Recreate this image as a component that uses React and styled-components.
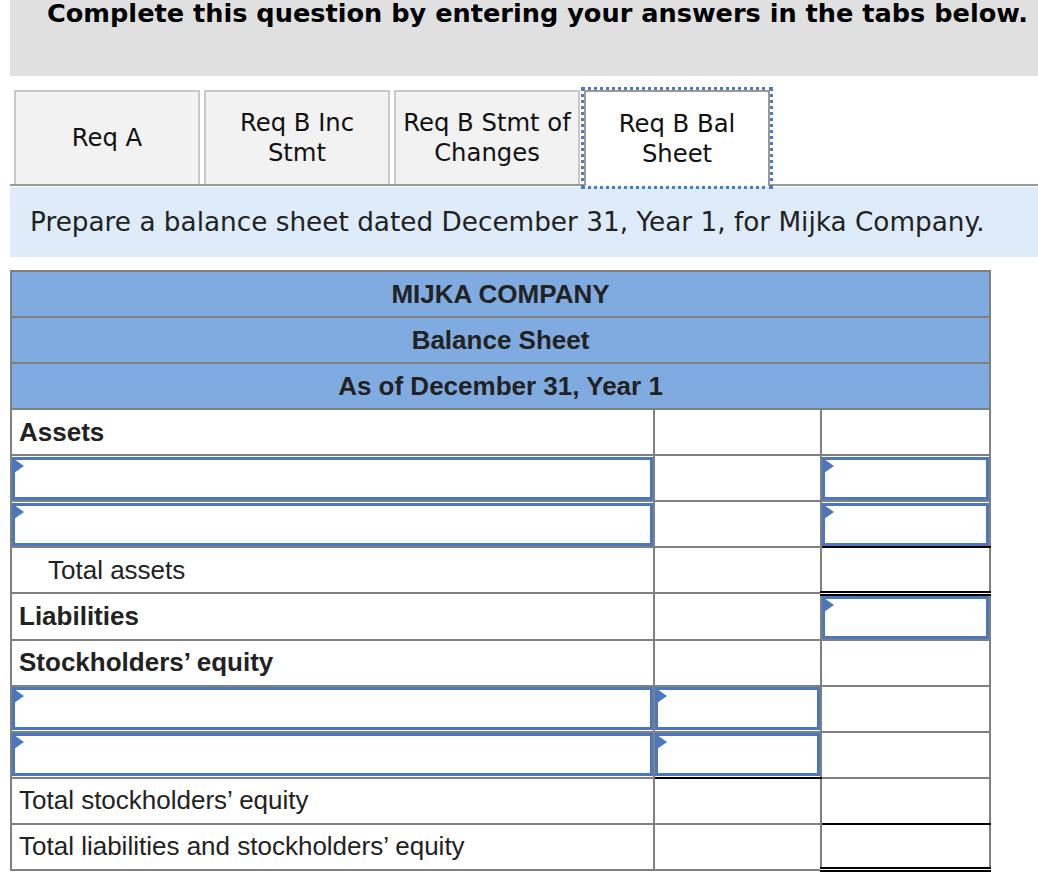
import React from 'react';
import styled, { createGlobalStyle, css } from 'styled-components';

const GlobalStyle = createGlobalStyle`
  * {
    margin: 0;
    padding: 0;
    box-sizing: border-box;
  }

  body {
    background: #ffffff;
    font-family: "DejaVu Sans", Verdana, sans-serif;
    overflow: hidden;
  }
`

const Page = styled.div`
  width: 1038px;
  padding-left: 10px;
`

const Banner = styled.div`
  height: 76px;
  background: #e0e0e0;
  padding-left: 37px;
  white-space: nowrap;
  overflow: hidden;
`

const BannerTitle = styled.h2`
  font-size: 25.6px;
  font-weight: 700;
  line-height: 26px;
  color: #000000;
`

const TabBar = styled.div`
  display: flex;
  gap: 4px;
  margin-top: 14px;
  padding-left: 4px;
  height: 96px;
  border-bottom: 2px solid #999999;
`

const Tab = styled.div`
  width: 186px;
  height: 94px;
  display: flex;
  align-items: center;
  justify-content: center;
  text-align: center;
  font-size: 24.3px;
  line-height: 30px;
  color: #111111;
  background: #f2f2f2;
  border: 2px solid #c8c8c8;
  border-bottom: none;
  cursor: pointer;

  ${p => p.$active && css`
    position: relative;
    z-index: 1;
    height: 96px;
    background: #ffffff;
    border-color: #999999;
    outline: 3px dotted #4a7cc4;
    outline-offset: 0;
  `}
`

const Prompt = styled.p`
  margin-top: 1px;
  height: 70px;
  display: flex;
  align-items: center;
  padding-left: 20px;
  background: #deecf9;
  font-size: 26.3px;
  color: #222222;
  white-space: nowrap;
`

const Sheet = styled.table`
  margin-top: 13px;
  width: 979px;
  border-collapse: collapse;
  table-layout: fixed;
  font-family: "Liberation Sans", Arial, sans-serif;
  font-size: 26px;
  color: #222222;
`

const HeadCell = styled.th`
  height: 46px;
  padding: 0;
  background: #80abe0;
  border: 2px solid #808080;
  font-weight: 700;
  text-align: center;
`

const Cell = styled.td`
  height: 46px;
  padding: 0 0 0 ${p => (p.$indent ? 36 : 7)}px;
  border: 2px solid #808080;
  font-weight: ${p => (p.$bold ? 700 : 400)};
  white-space: nowrap;
  vertical-align: middle;

  ${p => p.$entry && css`
    padding: 0;
  `}
  ${p => p.$under === 'single' && css`
    border-bottom: 2px solid #000000;
  `}
  ${p => p.$under === 'double' && css`
    border-bottom: 5px double #000000;
  `}
`

const Entry = styled.div`
  position: relative;
  height: 43px;

  &::before {
    content: '';
    position: absolute;
    left: 2px;
    top: 2px;
    border-left: 10px solid #4b77be;
    border-top: 7px solid transparent;
    border-bottom: 7px solid transparent;
  }
`

const Field = styled.input`
  display: block;
  width: 100%;
  height: 100%;
  border: 3px solid #4b77be;
  background: transparent;
  outline: none;
  font: inherit;
  padding: 0 8px;
`

const tabs = [
  ['Req A'],
  ['Req B Inc', 'Stmt'],
  ['Req B Stmt of', 'Changes'],
  ['Req B Bal', 'Sheet'],
]

// label column, then which of col 2 / col 3 hold an entry or an underline
const rows = [
  { label: 'Assets', bold: true },
  { entry: true, c3: 'entry' },
  { entry: true, c3: 'entry', u3: 'single' },
  { label: 'Total assets', indent: true, u3: 'double' },
  { label: 'Liabilities', bold: true, c3: 'entry' },
  { label: 'Stockholders’ equity', bold: true },
  { entry: true, c2: 'entry' },
  { entry: true, c2: 'entry', u2: 'single' },
  { label: 'Total stockholders’ equity', u3: 'single' },
  { label: 'Total liabilities and stockholders’ equity', u3: 'double' },
]

const Input = () => (
  <Entry>
    <Field type="text" />
  </Entry>
)

export default function App() {
  return (
    <Page>
      <GlobalStyle />
      <Banner>
        <BannerTitle>Complete this question by entering your answers in the tabs below.</BannerTitle>
      </Banner>

      <TabBar>
        {tabs.map((lines, i) => (
          <Tab key={i} $active={i === 3}>
            <span>
              {lines.map((l, j) => (
                <React.Fragment key={j}>
                  {j > 0 && <br />}
                  {l}
                </React.Fragment>
              ))}
            </span>
          </Tab>
        ))}
      </TabBar>

      <Prompt>Prepare a balance sheet dated December 31, Year 1, for Mijka Company.</Prompt>

      <Sheet>
        <colgroup>
          <col style={{ width: 643 }} />
          <col style={{ width: 167 }} />
          <col style={{ width: 169 }} />
        </colgroup>
        <thead>
          <tr><HeadCell colSpan={3}>MIJKA COMPANY</HeadCell></tr>
          <tr><HeadCell colSpan={3}>Balance Sheet</HeadCell></tr>
          <tr><HeadCell colSpan={3}>As of December 31, Year 1</HeadCell></tr>
        </thead>
        <tbody>
          {rows.map((r, i) => (
            <tr key={i}>
              {r.entry ? (
                <Cell $entry><Input /></Cell>
              ) : (
                <Cell $bold={r.bold} $indent={r.indent}>{r.label}</Cell>
              )}
              <Cell $entry $under={r.u2}>{r.c2 === 'entry' && <Input />}</Cell>
              <Cell $entry $under={r.u3}>{r.c3 === 'entry' && <Input />}</Cell>
            </tr>
          ))}
        </tbody>
      </Sheet>
    </Page>
  );
}
